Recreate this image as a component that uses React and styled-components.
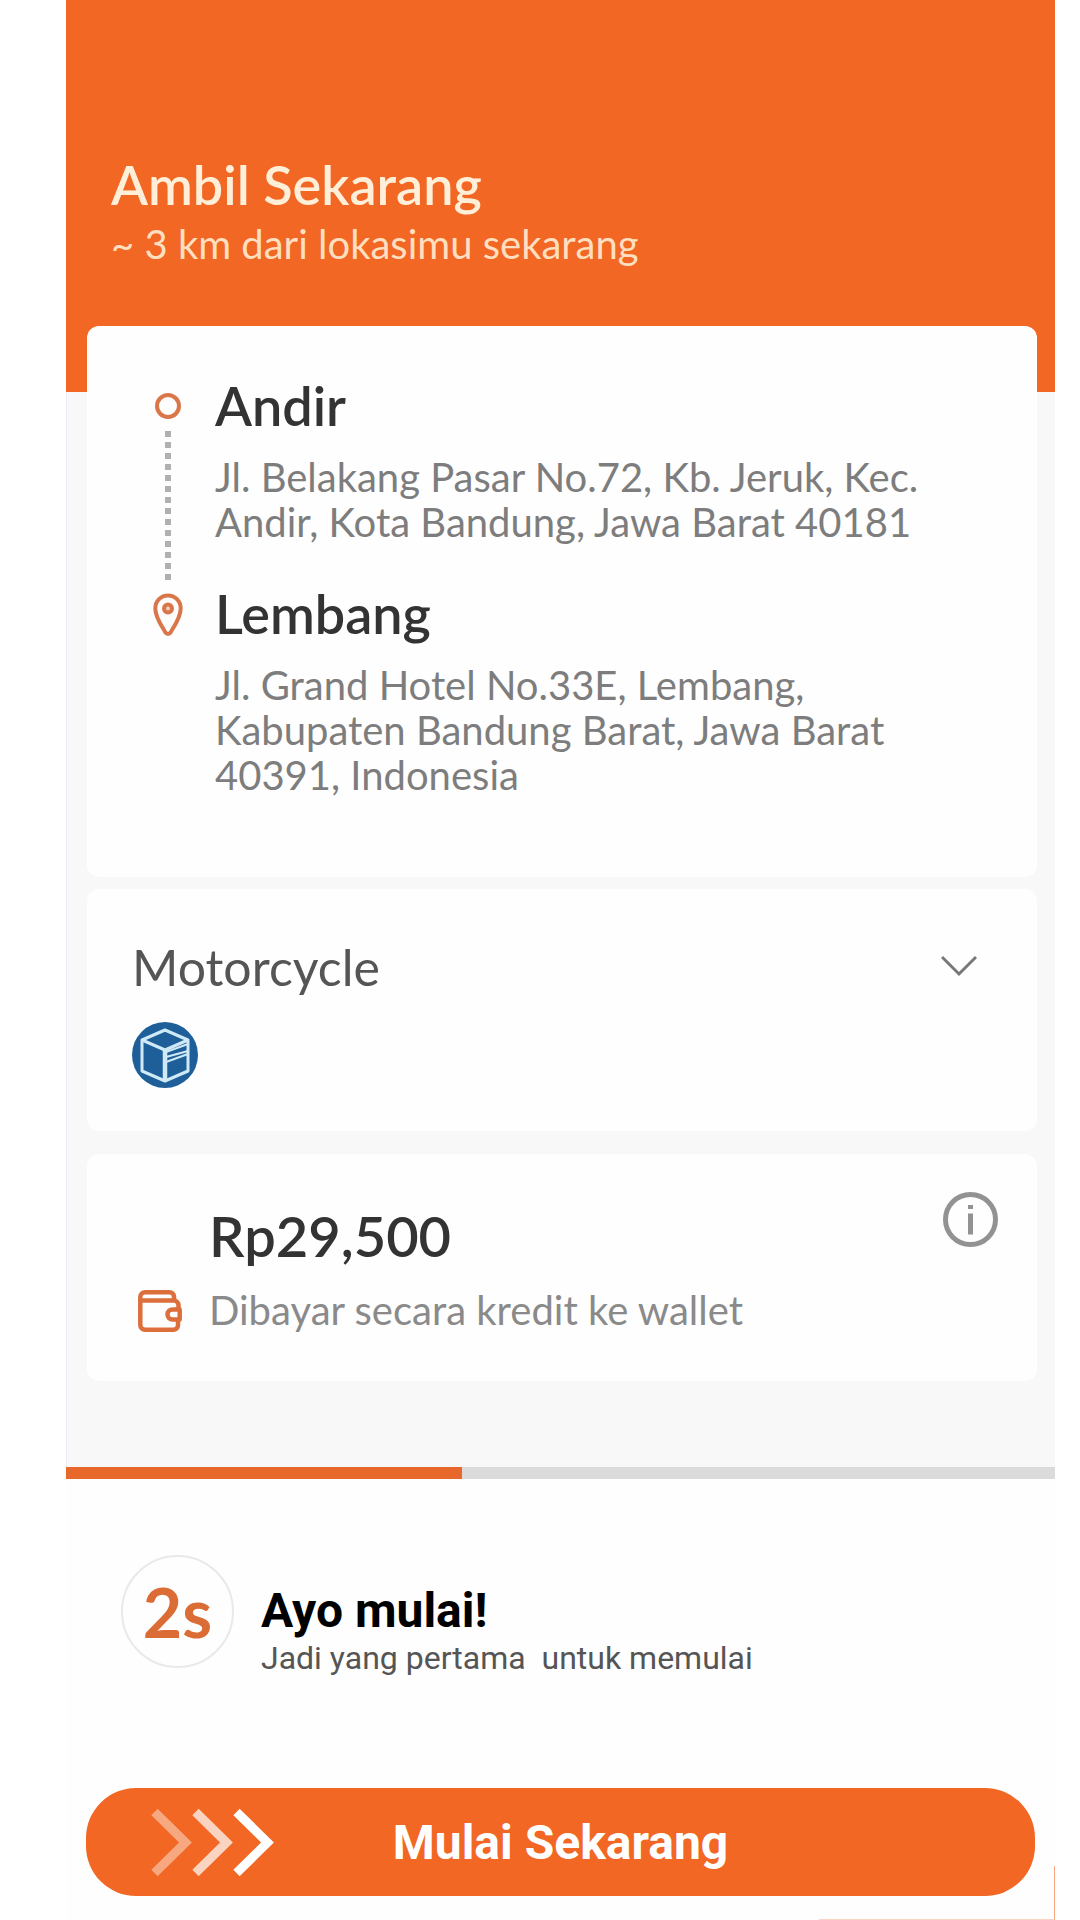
/* eslint-disable react/prop-types */
import styled, { createGlobalStyle } from "styled-components";

const GlobalStyle = createGlobalStyle`
    * {
        box-sizing: border-box;
    }
    body {
        margin: 0;
        background: #ffffff;
        font-family: Lato, "Open Sans", sans-serif;
    }
    h1, h2, p {
        margin: 0;
    }
    button {
        border: none;
        padding: 0;
        background: none;
        font: inherit;
        cursor: pointer;
    }
    svg {
        display: block;
    }
`;

const Page = styled.div`
    min-height: 100vh;
    padding: 0 25px 0 66px;
`;

const Screen = styled.main`
    position: relative;
    display: flex;
    flex-direction: column;
    min-height: 100vh;
    background: #f8f8f8;
    box-shadow: inset 1px 0 #ececf4;
`;

const Header = styled.header`
    padding: 156px 45px 124px;
    background: #f16723;
`;

const HeaderTitle = styled.h1`
    font-size: 54px;
    line-height: 58px;
    font-weight: 600;
    color: #ffefd9;
`;

const HeaderText = styled.p`
    margin-top: 6px;
    font-size: 40px;
    line-height: 48px;
    color: #ffdfc0;
`;

const Cards = styled.div`
    display: flex;
    flex-direction: column;
    gap: 12px;
    margin-top: -66px;
    padding: 0 18px 86px 21px;
`;

const Card = styled.section`
    border-radius: 12px;
    background: #fefefe;
`;

const Route = styled(Card)`
    padding: 51px 60px 79px 66px;
`;

const Stop = styled.div`
    display: flex;
    gap: 32px;
`;

const Marker = styled.div`
    display: flex;
    flex-direction: column;
    align-items: center;
    flex: 0 0 30px;
    padding-top: ${(props) => (props.$last ? "8px" : "14px")};
`;

const Dots = styled.div`
    flex: 1;
    width: 6px;
    margin-top: 10px;
    background: repeating-linear-gradient(#b0b0b0 0 6px, #fefefe 6px 11px);
`;

const StopBody = styled.div`
    padding-bottom: ${(props) => (props.$last ? "0" : "40px")};
`;

const StopName = styled.h2`
    font-size: 54px;
    line-height: 58px;
    font-weight: 600;
    color: #333333;
`;

const Address = styled.p`
    margin-top: 20px;
    font-size: 40px;
    line-height: 45px;
    color: #7d7d7d;
    white-space: pre-line;
`;

const Vehicle = styled(Card)`
    padding: 48px 60px 43px 45px;
`;

const VehicleToggle = styled.button`
    display: flex;
    justify-content: space-between;
    align-items: center;
    width: 100%;
    margin-bottom: 24px;
    font-size: 50px;
    line-height: 60px;
    color: #555555;
`;

const Fare = styled(Card)`
    display: flex;
    justify-content: space-between;
    margin-top: 11px;
    padding: 38px 39px 48px 51px;
`;

const FareGrid = styled.div`
    display: grid;
    grid-template-columns: 44px auto;
    column-gap: 27px;
    row-gap: 18px;
    align-items: center;
    padding-top: 10px;
`;

const Price = styled.h2`
    grid-column: 2;
    font-size: 56px;
    line-height: 68px;
    font-weight: 600;
    color: #333333;
`;

const FareText = styled.p`
    font-size: 40px;
    line-height: 45px;
    color: #8a8a8a;
`;

const InfoButton = styled.button`
    align-self: flex-start;
`;

const Track = styled.div`
    height: 12px;
    background: #dbdbdb;
`;

const Bar = styled.div`
    height: 100%;
    background: #e8682b;
`;

const Footer = styled.footer`
    flex: 1;
    padding: 76px 20px 24px;
    background: #fefefe;
`;

const Countdown = styled.div`
    display: flex;
    gap: 27px;
    padding-left: 35px;
`;

const Timer = styled.div`
    display: flex;
    justify-content: center;
    align-items: center;
    flex: none;
    width: 113px;
    height: 113px;
    border: 2px solid #e9e9e9;
    border-radius: 50%;
    font-size: 68px;
    font-weight: 700;
    color: #dc6c35;
`;

const Prompt = styled.div`
    padding-top: 30px;
    font-family: Roboto, sans-serif;
`;

const PromptTitle = styled.h2`
    font-size: 48px;
    line-height: 52px;
    font-weight: 700;
    color: #000000;
`;

const PromptText = styled.p`
    font-size: 32px;
    line-height: 42px;
    color: #555555;
    white-space: pre-wrap;
`;

const StartButton = styled.button`
    display: grid;
    grid-template-columns: 1fr auto 1fr;
    align-items: center;
    width: 100%;
    height: 108px;
    margin-top: 109px;
    border-radius: 50px;
    background: #f16723;
    color: #ffffff;
    font-family: Roboto, sans-serif;
    font-size: 48px;
    font-weight: 700;
`;

const Arrows = styled.svg`
    margin-left: 65px;
`;

/* thin orange edge that shows in the bottom corner, over the footer */
const Corner = styled.div`
    position: absolute;
    right: 0;
    bottom: 0;
    width: 236px;
    height: 54px;
    border-right: 1px solid #f9a47c;
    border-bottom: 1px solid #fbd5c3;
    pointer-events: none;
`;

const stops = [
    {
        name: "Andir",
        address: "Jl. Belakang Pasar No.72, Kb. Jeruk, Kec.\nAndir, Kota Bandung, Jawa Barat 40181",
    },
    {
        name: "Lembang",
        address: "Jl. Grand Hotel No.33E, Lembang,\nKabupaten Bandung Barat, Jawa Barat\n40391, Indonesia",
    },
];

function RingIcon() {
    return (
        <svg width="30" height="30" viewBox="0 0 30 30" fill="none" stroke="#d9774a" strokeWidth="4">
            <circle cx="15" cy="15" r="11" />
        </svg>
    );
}

function PinIcon() {
    return (
        <svg width="30" height="44" viewBox="0 0 30 44" fill="none" stroke="#d9774a" strokeWidth="4">
            <path d="M15 2.500C8 2.500 2.300 8 2.300 15.500c0 9 6.700 18 10 23.700 1.400 2.400 4 2.400 5.400 0 3.300-5.700 10-14.700 10-23.700C27.700 8 22 2.500 15 2.500z" />
            <circle cx="15" cy="15.500" r="4" fill="#f3cdb9" />
        </svg>
    );
}

function ChevronIcon() {
    return (
        <svg width="36" height="24" viewBox="0 0 36 24" fill="none" stroke="#777777" strokeWidth="3">
            <path d="M1 2l17 17L35 2" />
        </svg>
    );
}

function BoxIcon() {
    return (
        <svg width="66" height="67" viewBox="0 0 66 67" fill="none" stroke="#cfe9f7" strokeWidth="3" strokeLinejoin="round">
            <circle cx="33" cy="34" r="33" fill="#1f5f99" stroke="none" />
            <path d="M33 9L10 19v31l23 10 23-10V19z" />
            <path d="M10 19l23 10 23-10" />
            <path d="M33 29v31" strokeWidth="4.500" />
            <path d="M34 31l22-8M34 36l22-6M34 41l22-8" strokeWidth="2" />
        </svg>
    );
}

function WalletIcon() {
    return (
        <svg width="44" height="42" viewBox="0 0 44 42" fill="none" stroke="#dc6f3c" strokeWidth="4.500" strokeLinejoin="round">
            <path d="M36 11V6.500a4.500 4.500 0 0 0-4.500-4.200H7a4.700 4.700 0 0 0-4.700 4.700v28a4.700 4.700 0 0 0 4.700 4.700h28.500a4.500 4.500 0 0 0 4.500-4.500V30" />
            <path d="M2.300 10.500h33.200a5 5 0 0 1 5 5v4" />
            <path d="M41.700 19.500h-7.200a5 5 0 0 0 0 10h7.200z" />
        </svg>
    );
}

function InfoIcon() {
    return (
        <svg width="55" height="55" viewBox="0 0 55 55" fill="none" stroke="#929292" strokeWidth="5">
            <circle cx="27.500" cy="27.500" r="25" />
            <path d="M27.500 21.500v21M27.500 13v4" />
        </svg>
    );
}

function ArrowsIcon() {
    return (
        <Arrows width="124" height="68" viewBox="0 0 124 68" fill="none" stroke="#ffffff" strokeWidth="9">
            <path d="M3.500 4L34.500 34.500 3.500 65" opacity="0.430" />
            <path d="M44.500 4L75.500 34.500 44.500 65" opacity="0.720" />
            <path d="M85.500 4L116.500 34.500 85.500 65" />
        </Arrows>
    );
}

function App() {
    const progress = 40;

    return (
        <Page>
            <GlobalStyle />
            <Screen>
                <Header>
                    <HeaderTitle>Ambil Sekarang</HeaderTitle>
                    <HeaderText>~ 3 km dari lokasimu sekarang</HeaderText>
                </Header>

                <Cards>
                    <Route>
                        {stops.map((stop, i) => {
                            const last = i === stops.length - 1;
                            return (
                                <Stop key={stop.name}>
                                    <Marker $last={last}>
                                        {last ? <PinIcon /> : <RingIcon />}
                                        {!last && <Dots />}
                                    </Marker>
                                    <StopBody $last={last}>
                                        <StopName>{stop.name}</StopName>
                                        <Address>{stop.address}</Address>
                                    </StopBody>
                                </Stop>
                            );
                        })}
                    </Route>

                    <Vehicle>
                        <VehicleToggle type="button">
                            Motorcycle
                            <ChevronIcon />
                        </VehicleToggle>
                        <BoxIcon />
                    </Vehicle>

                    <Fare>
                        <FareGrid>
                            <Price>Rp29,500</Price>
                            <WalletIcon />
                            <FareText>Dibayar secara kredit ke wallet</FareText>
                        </FareGrid>
                        <InfoButton type="button" aria-label="Info">
                            <InfoIcon />
                        </InfoButton>
                    </Fare>
                </Cards>

                <Track role="progressbar" aria-valuenow={progress}>
                    <Bar style={{ width: `${progress}%` }} />
                </Track>

                <Footer>
                    <Countdown>
                        <Timer>2s</Timer>
                        <Prompt>
                            <PromptTitle>Ayo mulai!</PromptTitle>
                            <PromptText>{"Jadi yang pertama  untuk memulai"}</PromptText>
                        </Prompt>
                    </Countdown>
                    <StartButton type="button">
                        <ArrowsIcon />
                        <span>Mulai Sekarang</span>
                    </StartButton>
                </Footer>
                <Corner />
            </Screen>
        </Page>
    );
}

export default App;
